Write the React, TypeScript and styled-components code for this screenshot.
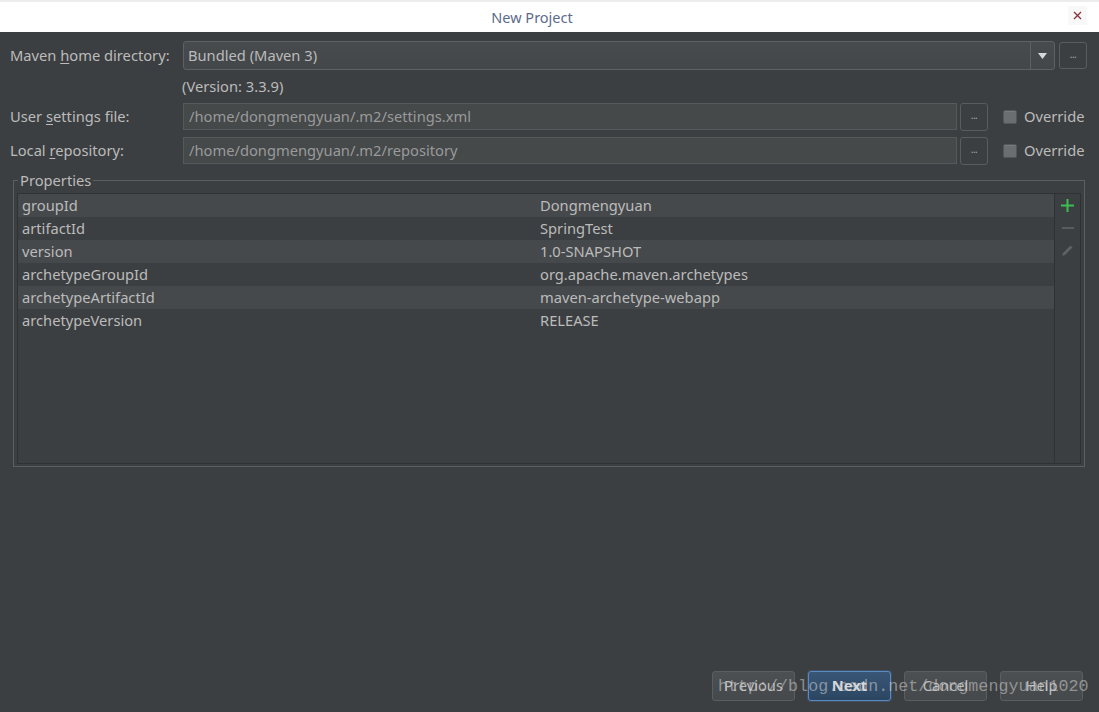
import React from "react";
import styled, { createGlobalStyle } from "styled-components";

const Global = createGlobalStyle`
  html, body { margin: 0; padding: 0; background: #3c3f41; }
  * { box-sizing: border-box; }
`;

const Window = styled.div`
  position: relative;
  width: 1099px;
  height: 712px;
  display: flex;
  flex-direction: column;
  background: #3c3f41;
  font-family: "Noto Sans", "Open Sans", sans-serif;
  font-size: 14.7px;
  color: #bbbbbb;
  overflow: hidden;
`;

const TitleBar = styled.div`
  height: 32px;
  flex: none;
  background: #ffffff;
  border-top: 2px solid #ececec;
  display: flex;
  align-items: center;
  justify-content: center;
  padding-right: 35px;
  position: relative;
`;

const Title = styled.div`
  color: #5d6b8a;
  font-size: 14.5px;
`;

const CloseBox = styled.div`
  position: absolute;
  right: 12px;
  top: 4px;
  width: 19px;
  height: 19px;
  background: #f8f8f8;
  display: flex;
  align-items: center;
  justify-content: center;
`;

const Content = styled.div`
  flex: 1;
  display: flex;
  flex-direction: column;
  padding: 9px 12px 11px 10px;
`;

const Row = styled.div<{ $h: number; $mt?: number }>`
  display: flex;
  align-items: center;
  height: ${(p) => p.$h}px;
  margin-top: ${(p) => p.$mt ?? 0}px;
`;

const Label = styled.div`
  width: 173px;
  flex: none;
  white-space: nowrap;
  color: #bbbbbb;
  padding-bottom: 2px;
`;

const U = styled.span`
  text-decoration: underline;
  text-underline-offset: 2px;
`;

const Combo = styled.div`
  flex: 1;
  height: 100%;
  display: flex;
  border: 1px solid #5e6163;
  border-radius: 3px;
  background: linear-gradient(#474b4d, #434749);
`;

const ComboText = styled.div`
  flex: 1;
  display: flex;
  align-items: center;
  padding: 0 0 2px 4px;
  color: #bbbbbb;
`;

const ComboArrow = styled.div`
  width: 24px;
  flex: none;
  border-left: 1px solid #5e6163;
  display: flex;
  align-items: center;
  justify-content: center;
`;

const Field = styled.div<{ $w: number }>`
  width: ${(p) => p.$w}px;
  flex: none;
  height: 100%;
  border: 1px solid #56595b;
  background: #45494a;
  display: flex;
  align-items: center;
  padding: 0 0 2px 5px;
  color: #9a9a9a;
`;

const DotsButton = styled.div<{ $ml: number; $h: number }>`
  width: 28px;
  height: ${(p) => p.$h}px;
  flex: none;
  margin-left: ${(p) => p.$ml}px;
  border: 1px solid #5a5d5f;
  border-radius: 3px;
  background: #3c3f41;
  display: flex;
  align-items: center;
  justify-content: center;
  font-size: 10px;
  color: #a8a8a8;
  letter-spacing: -0.5px;
  padding-bottom: 3px;
`;

const CheckWrap = styled.div`
  display: flex;
  align-items: center;
  margin-left: 15px;
  gap: 7px;
`;

const CheckLabel = styled.span`
  padding-bottom: 2px;
`;

const CheckBox = styled.div`
  width: 14px;
  height: 14px;
  border-radius: 2px;
  background: #6b6e70;
  border: 1px solid #545759;
  box-shadow: inset 0 1px 0 #77797b;
`;

const VersionLine = styled.div`
  height: 33px;
  display: flex;
  align-items: center;
  padding: 0 0 2px 172px;
`;

const Group = styled.fieldset`
  margin: 7px 2px 0 3px;
  padding: 4px 3px 3px 3px;
  border: 1px solid #5b5f61;
  min-width: 0;
  height: 296px;
  display: flex;
`;

const Legend = styled.legend`
  padding: 0 2px;
  margin-left: 1px;
  line-height: 18px;
  font-size: 14.7px;
  color: #bbbbbb;
`;

const Table = styled.div`
  flex: 1;
  height: 271px;
  border: 1px solid #2f3133;
  display: flex;
`;

const Rows = styled.div`
  flex: 1;
  display: flex;
  flex-direction: column;
`;

const PropRow = styled.div<{ $odd: boolean }>`
  height: 23px;
  display: flex;
  align-items: center;
  padding-bottom: 2px;
  background: ${(p) => (p.$odd ? "#46494b" : "#3c3f41")};
`;

const Key = styled.div`
  width: 522px;
  padding-left: 4px;
  color: #bbbbbb;
`;

const Val = styled.div`
  color: #bbbbbb;
`;

const Tools = styled.div`
  width: 26px;
  flex: none;
  border-left: 1px solid #2f3133;
  display: flex;
  flex-direction: column;
  align-items: center;
  padding-top: 5px;
  gap: 10px;
`;

const ButtonBar = styled.div`
  margin-top: auto;
  display: flex;
  justify-content: flex-end;
  gap: 13px;
  padding-right: 4px;
`;

const Button = styled.div<{ $primary?: boolean }>`
  width: 83px;
  height: 30px;
  border-radius: 3px;
  display: flex;
  align-items: center;
  justify-content: center;
  padding-bottom: 2px;
  border: 1px solid ${(p) => (p.$primary ? "#5b8ac2" : "#5a5e60")};
  background: ${(p) =>
    p.$primary ? "linear-gradient(#3a5677, #2c4661)" : "linear-gradient(#4c5052, #46494b)"};
  color: ${(p) => (p.$primary ? "#d8d8d8" : "#bbbbbb")};
  font-weight: ${(p) => (p.$primary ? 700 : 400)};
  box-shadow: ${(p) => (p.$primary ? "0 0 0 1px rgba(70,110,160,0.35)" : "none")};
`;

const Watermark = styled.div`
  position: absolute;
  left: 718px;
  top: 677px;
  font-family: "Liberation Mono", monospace;
  font-size: 16.7px;
  color: rgba(210, 210, 210, 0.55);
  white-space: nowrap;
  pointer-events: none;
`;

const props: [string, string][] = [
  ["groupId", "Dongmengyuan"],
  ["artifactId", "SpringTest"],
  ["version", "1.0-SNAPSHOT"],
  ["archetypeGroupId", "org.apache.maven.archetypes"],
  ["archetypeArtifactId", "maven-archetype-webapp"],
  ["archetypeVersion", "RELEASE"],
];

export default function App() {
  return (
    <Window>
      <Global />
      <TitleBar>
        <Title>New Project</Title>
        <CloseBox>
          <svg width="9" height="9" viewBox="0 0 9 9">
            <path d="M1 1L8 8M8 1L1 8" stroke="#8a2f3c" strokeWidth="1.3" />
          </svg>
        </CloseBox>
      </TitleBar>
      <Content>
        <Row $h={29}>
          <Label>
            Maven <U>h</U>ome directory:
          </Label>
          <Combo>
            <ComboText>Bundled (Maven 3)</ComboText>
            <ComboArrow>
              <svg width="9" height="6" viewBox="0 0 9 6">
                <path d="M0 0H9L4.5 6Z" fill="#d8d8d8" />
              </svg>
            </ComboArrow>
          </Combo>
          <DotsButton $ml={4} $h={27}>...</DotsButton>
        </Row>
        <VersionLine>(Version: 3.3.9)</VersionLine>
        <Row $h={27}>
          <Label>
            User <U>s</U>ettings file:
          </Label>
          <Field $w={774}>/home/dongmengyuan/.m2/settings.xml</Field>
          <DotsButton $ml={3} $h={28}>...</DotsButton>
          <CheckWrap>
            <CheckBox />
            <CheckLabel>Override</CheckLabel>
          </CheckWrap>
        </Row>
        <Row $h={27} $mt={7}>
          <Label>
            Local <U>r</U>epository:
          </Label>
          <Field $w={774}>/home/dongmengyuan/.m2/repository</Field>
          <DotsButton $ml={3} $h={28}>...</DotsButton>
          <CheckWrap>
            <CheckBox />
            <CheckLabel>Override</CheckLabel>
          </CheckWrap>
        </Row>
        <Group>
          <Legend>Properties</Legend>
          <Table>
            <Rows>
              {props.map(([k, v], i) => (
                <PropRow key={k} $odd={i % 2 === 0}>
                  <Key>{k}</Key>
                  <Val>{v}</Val>
                </PropRow>
              ))}
            </Rows>
            <Tools>
              <svg width="13" height="13" viewBox="0 0 13 13">
                <path d="M6.5 0V13M0 6.5H13" stroke="#3dbd52" strokeWidth="2" />
              </svg>
              <svg width="12" height="12" viewBox="0 0 12 12">
                <path d="M0 6H12" stroke="#595c5e" strokeWidth="2" />
              </svg>
              <svg width="13" height="13" viewBox="0 0 13 13">
                <path d="M9.5 1.5L11.5 3.5L4 11L1.2 11.8L2 9Z" fill="#5f6264" />
              </svg>
            </Tools>
          </Table>
        </Group>
        <ButtonBar>
          <Button>Previous</Button>
          <Button $primary>Next</Button>
          <Button>Cancel</Button>
          <Button>Help</Button>
        </ButtonBar>
      </Content>
      <Watermark>http://blog.csdn.net/dongmengyuan1020</Watermark>
    </Window>
  );
}
